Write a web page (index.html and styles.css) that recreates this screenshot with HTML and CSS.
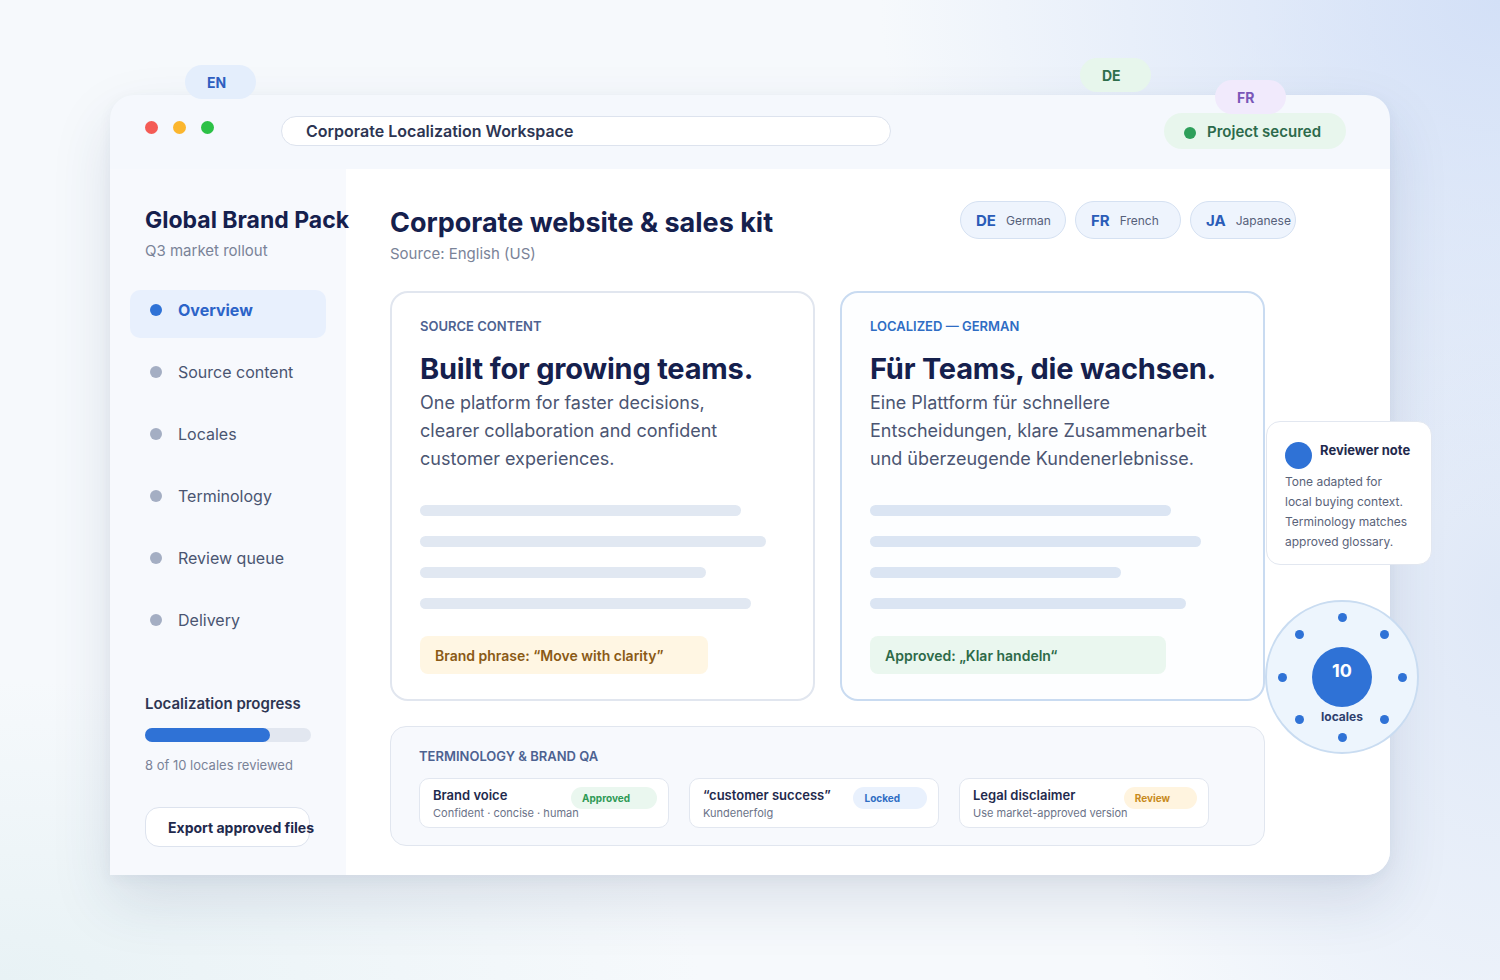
FILE: index.html
```html
<!DOCTYPE html>
<html lang="en">

<head>
    <meta charset="UTF-8">
    <meta name="viewport" content="width=device-width, initial-scale=1.0">
    <title>Corporate Localization Workspace</title>
    <link rel="stylesheet" href="styles.css">
</head>

<body>
    <div class="stage">
        <span class="float-tag tag-en">EN</span>
        <span class="float-tag tag-de">DE</span>
        <span class="float-tag tag-fr">FR</span>

        <div class="window">
            <div class="topbar">
                <div class="lights">
                    <span class="light red"></span>
                    <span class="light yellow"></span>
                    <span class="light green"></span>
                </div>
                <div class="address">Corporate Localization Workspace</div>
                <div class="secured"><span class="secured-dot"></span>Project secured</div>
            </div>

            <div class="body">
                <aside class="sidebar">
                    <h2 class="project-title">Global Brand Pack</h2>
                    <p class="project-sub">Q3 market rollout</p>

                    <nav class="nav">
                        <div class="nav-item active"><span class="nav-dot"></span>Overview</div>
                        <div class="nav-item"><span class="nav-dot"></span>Source content</div>
                        <div class="nav-item"><span class="nav-dot"></span>Locales</div>
                        <div class="nav-item"><span class="nav-dot"></span>Terminology</div>
                        <div class="nav-item"><span class="nav-dot"></span>Review queue</div>
                        <div class="nav-item"><span class="nav-dot"></span>Delivery</div>
                    </nav>

                    <div class="progress-title">Localization progress</div>
                    <div class="progress-track">
                        <div class="progress-fill" style="width: 75%;"></div>
                    </div>
                    <div class="progress-note">8 of 10 locales reviewed</div>
                    <button class="export-btn">Export approved files</button>
                </aside>

                <main class="main">
                    <div class="header">
                        <div class="heading">
                            <h1>Corporate website &amp; sales kit</h1>
                            <p class="source-lang">Source: English (US)</p>
                        </div>
                        <div class="chips">
                            <div class="chip"><b>DE</b><span>German</span></div>
                            <div class="chip"><b>FR</b><span>French</span></div>
                            <div class="chip"><b>JA</b><span>Japanese</span></div>
                        </div>
                    </div>

                    <div class="cards">
                        <section class="card">
                            <div class="card-label">SOURCE CONTENT</div>
                            <h3 class="card-title">Built for growing teams.</h3>
                            <p class="card-text">One platform for faster decisions, clearer collaboration and confident customer experiences.</p>
                            <div class="bars">
                                <div class="bar" style="width: 321px;"></div>
                                <div class="bar" style="width: 346px;"></div>
                                <div class="bar" style="width: 286px;"></div>
                                <div class="bar" style="width: 331px;"></div>
                            </div>
                            <div class="phrase phrase-brand">Brand phrase: “Move with clarity”</div>
                        </section>

                        <section class="card card-localized">
                            <div class="card-label">LOCALIZED — GERMAN</div>
                            <h3 class="card-title">Für Teams, die wachsen.</h3>
                            <p class="card-text">Eine Plattform für schnellere Entscheidungen, klare Zusammenarbeit und überzeugende Kundenerlebnisse.</p>
                            <div class="bars">
                                <div class="bar" style="width: 301px;"></div>
                                <div class="bar" style="width: 331px;"></div>
                                <div class="bar" style="width: 251px;"></div>
                                <div class="bar" style="width: 316px;"></div>
                            </div>
                            <div class="phrase phrase-approved">Approved: „Klar handeln“</div>
                        </section>
                    </div>

                    <section class="qa">
                        <div class="card-label">TERMINOLOGY &amp; BRAND QA</div>
                        <div class="qa-items">
                            <div class="qa-item">
                                <div class="qa-title">Brand voice</div>
                                <div class="qa-sub">Confident · concise · human</div>
                                <span class="badge badge-approved">Approved</span>
                            </div>
                            <div class="qa-item">
                                <div class="qa-title">“customer success”</div>
                                <div class="qa-sub">Kundenerfolg</div>
                                <span class="badge badge-locked">Locked</span>
                            </div>
                            <div class="qa-item">
                                <div class="qa-title">Legal disclaimer</div>
                                <div class="qa-sub">Use market-approved version</div>
                                <span class="badge badge-review">Review</span>
                            </div>
                        </div>
                    </section>
                </main>
            </div>

            <!-- floating widgets over the window edge -->
            <div class="note">
                <div class="note-head"><span class="note-dot"></span>Reviewer note</div>
                <p class="note-text">Tone adapted for local buying context. Terminology matches approved glossary.</p>
            </div>

            <div class="locales">
                <span class="ldot d1"></span>
                <span class="ldot d2"></span>
                <span class="ldot d3"></span>
                <span class="ldot d4"></span>
                <span class="ldot d5"></span>
                <span class="ldot d6"></span>
                <span class="ldot d7"></span>
                <span class="ldot d8"></span>
                <div class="locales-core">10</div>
                <div class="locales-label">locales</div>
            </div>
        </div>
    </div>
</body>

</html>
```

FILE: styles.css
```css
* {
    box-sizing: border-box;
}

body {
    margin: 0;
    width: 1500px;
    height: 980px;
    overflow: hidden;
    font-family: Inter, "Noto Sans", sans-serif;
    color: #1f2a4d;
    background:
        radial-gradient(ellipse 620px 520px at 1500px 0, #d3e0f7 0%, rgba(211, 224, 247, 0) 100%),
        radial-gradient(ellipse 420px 700px at 1500px 600px, #dfe8f7 0%, rgba(223, 232, 247, 0) 100%),
        radial-gradient(ellipse 700px 300px at 0 980px, #e8f2f5 0%, rgba(232, 242, 245, 0) 100%),
        #f6f9fc;
}

.stage {
    position: relative;
    width: 1500px;
    height: 980px;
    padding-top: 95px;
}

/* floating language tags */
.float-tag {
    position: absolute;
    z-index: 3;
    width: 71px;
    height: 34px;
    border-radius: 17px;
    padding-left: 22px;
    display: flex;
    align-items: center;
    font-size: 14px;
    font-weight: 700;
}

.tag-en {
    left: 185px;
    top: 65px;
    background: #e4eefc;
    color: #2f5ec0;
}

.tag-de {
    left: 1080px;
    top: 58px;
    background: #e7f6ec;
    color: #2f6e4c;
}

.tag-fr {
    left: 1215px;
    top: 80px;
    background: #f1eafc;
    color: #7a56b8;
}

/* window */
.window {
    position: relative;
    margin-left: 110px;
    width: 1280px;
    height: 780px;
    border-radius: 24px 24px 24px 0;
    background: #f5f8fd;
    box-shadow: 0 26px 60px rgba(40, 62, 105, 0.13), 0 4px 14px rgba(40, 62, 105, 0.05);
    display: flex;
    flex-direction: column;
}

.topbar {
    height: 74px;
    flex-shrink: 0;
    display: flex;
    align-items: center;
    padding: 0 44px 0 35px;
}

.lights {
    display: flex;
    gap: 15px;
    margin-bottom: 9px;
}

.light {
    width: 13px;
    height: 13px;
    border-radius: 50%;
}

.red {
    background: #f45b55;
}

.yellow {
    background: #fbb62e;
}

.green {
    background: #2cc146;
}

.address {
    margin-left: 67px;
    width: 610px;
    height: 30px;
    border: 1px solid #dde3ee;
    border-radius: 15px;
    background: #fff;
    padding-left: 24px;
    display: flex;
    align-items: center;
    font-size: 16px;
    font-weight: 600;
    color: #2d3552;
    margin-bottom: 3px;
}

.secured {
    margin-left: auto;
    height: 36px;
    padding: 0 25px 0 20px;
    border-radius: 18px;
    background: #e8f6ed;
    display: flex;
    align-items: center;
    gap: 11px;
    font-size: 15px;
    font-weight: 600;
    color: #2c6a4b;
    margin-bottom: 2px;
}

.secured-dot {
    width: 12px;
    height: 12px;
    border-radius: 50%;
    background: #2e9f5a;
    margin-top: 3px;
}

.body {
    flex: 1;
    display: flex;
    min-height: 0;
}

/* sidebar */
.sidebar {
    position: relative;
    z-index: 1;
    width: 236px;
    flex-shrink: 0;
    background: #f7f9fd;
    padding: 36px 0 0 35px;
}

.project-title {
    margin: 0;
    font-size: 23px;
    line-height: 30px;
    font-weight: 700;
    color: #15204d;
    white-space: nowrap;
}

.project-sub {
    margin: 6px 0 0;
    font-size: 15px;
    line-height: 20px;
    color: #7a8398;
}

.nav {
    margin: 29px 0 0 -15px;
    display: flex;
    flex-direction: column;
    gap: 14px;
}

.nav-item {
    width: 196px;
    height: 48px;
    padding: 0 0 8px 20px;
    border-radius: 10px;
    display: flex;
    align-items: center;
    gap: 16px;
    font-size: 16px;
    color: #4a5571;
}

.nav-dot {
    width: 12px;
    height: 12px;
    border-radius: 50%;
    background: #a4aec3;
}

.nav-item.active {
    background: #e8f0fd;
    color: #2c63c8;
    font-weight: 700;
}

.nav-item.active .nav-dot {
    background: #2f72d6;
}

.progress-title {
    margin-top: 46px;
    font-size: 15px;
    line-height: 20px;
    font-weight: 600;
    color: #2d3552;
}

.progress-track {
    margin-top: 14px;
    width: 166px;
    height: 14px;
    border-radius: 7px;
    background: #e2e7f0;
}

.progress-fill {
    height: 100%;
    border-radius: 7px;
    background: #2f72d6;
}

.progress-note {
    margin-top: 15px;
    font-size: 13px;
    line-height: 16px;
    color: #7a8398;
}

.export-btn {
    margin-top: 34px;
    width: 165px;
    height: 40px;
    padding: 0 0 0 22px;
    border: 1px solid #dde3ee;
    border-radius: 14px;
    background: #fff;
    text-align: left;
    white-space: nowrap;
    font-family: inherit;
    font-size: 14px;
    font-weight: 700;
    color: #1f2a4d;
}

/* main */
.main {
    flex: 1;
    background: #fff;
    border-bottom-right-radius: 24px;
    padding: 32px 0 0 44px;
}

.header {
    width: 906px;
    display: flex;
    justify-content: space-between;
    align-items: flex-start;
}

.heading {
    margin-top: 5px;
}

.heading h1 {
    margin: 0;
    font-size: 27px;
    line-height: 34px;
    font-weight: 700;
    color: #15204d;
}

.source-lang {
    margin: 4px 0 0;
    font-size: 15px;
    line-height: 20px;
    color: #7a8398;
}

.chips {
    display: flex;
    gap: 9px;
}

.chip {
    width: 106px;
    height: 38px;
    padding-left: 15px;
    border: 1px solid #d5e1f2;
    border-radius: 19px;
    background: #eef4fd;
    display: flex;
    align-items: center;
    gap: 10px;
    white-space: nowrap;
}

.chip b {
    font-size: 15px;
    font-weight: 700;
    color: #2a5cb8;
}

.chip span {
    font-size: 12px;
    color: #56607a;
}

.cards {
    margin-top: 27px;
    display: grid;
    grid-template-columns: 425px 425px;
    gap: 25px;
    height: 410px;
}

.card {
    border: 2px solid #e1e6ef;
    border-radius: 18px;
    background: #fff;
    padding: 25px 28px;
}

.card-localized {
    border-color: #c9dbf1;
    background: #fdfeff;
}

.card-label {
    font-size: 13px;
    line-height: 16px;
    font-weight: 600;
    color: #4d6291;
}

.card-localized .card-label {
    color: #2f6dc4;
}

.card-title {
    margin: 17px 0 0;
    font-size: 29px;
    line-height: 36px;
    font-weight: 700;
    letter-spacing: -0.2px;
    color: #15204d;
    white-space: nowrap;
}

.card-text {
    margin: 2px 0 0;
    max-width: 345px;
    font-size: 18px;
    line-height: 28px;
    color: #4b5572;
}

.bars {
    margin-top: 32px;
    display: flex;
    flex-direction: column;
    gap: 20px;
}

.bar {
    height: 11px;
    border-radius: 6px;
    background: #e1e8f2;
}

.card-localized .bar {
    background: #dbe5f3;
}

.phrase {
    margin-top: 27px;
    height: 38px;
    border-radius: 8px;
    padding-left: 15px;
    display: flex;
    align-items: center;
    font-size: 14px;
    font-weight: 600;
}

.phrase-brand {
    width: 288px;
    background: #fff6e3;
    color: #8a5a16;
}

.phrase-approved {
    width: 296px;
    background: #eaf7ef;
    color: #2d6a48;
}

/* terminology */
.qa {
    margin-top: 25px;
    width: 875px;
    height: 120px;
    border: 1px solid #e1e6ef;
    border-radius: 16px;
    background: #f7f9fd;
    padding: 21px 0 0 28px;
}

.qa .card-label {
    color: #4d6291;
}

.qa-items {
    margin-top: 14px;
    display: flex;
    gap: 20px;
}

.qa-item {
    position: relative;
    width: 250px;
    height: 50px;
    border: 1px solid #e2e7f0;
    border-radius: 10px;
    background: #fff;
    padding: 8px 13px;
}

.qa-title {
    font-size: 13px;
    line-height: 17px;
    font-weight: 600;
    color: #1f2a4d;
}

.qa-sub {
    margin-top: 2px;
    font-size: 11px;
    line-height: 15px;
    color: #6b7388;
    white-space: nowrap;
}

.badge {
    position: absolute;
    top: 8px;
    right: 11px;
    height: 22px;
    border-radius: 11px;
    padding: 0 27px 0 11px;
    font-size: 10px;
    line-height: 22px;
    font-weight: 700;
}

.badge-approved {
    background: #eaf7ef;
    color: #2e9a55;
}

.badge-locked {
    background: #e9f1fd;
    color: #2f6dc4;
}

.badge-review {
    background: #fff4df;
    color: #c88a1c;
}

/* reviewer note */
.note {
    position: absolute;
    left: 1156px;
    top: 326px;
    width: 166px;
    height: 144px;
    border: 1px solid #e2e7f0;
    border-radius: 14px;
    background: #fff;
    padding: 19px 10px 0 18px;
}

.note-head {
    display: flex;
    align-items: flex-start;
    gap: 8px;
    font-size: 13px;
    line-height: 18px;
    font-weight: 700;
    color: #1f2a4d;
}

.note-dot {
    width: 27px;
    height: 27px;
    border-radius: 50%;
    background: #2f72d6;
    flex-shrink: 0;
    margin-top: 1px;
}

.note-text {
    margin: 3px 0 0;
    width: 124px;
    font-size: 12px;
    line-height: 20px;
    color: #5a6379;
}

/* locales ring */
.locales {
    position: absolute;
    left: 1155px;
    top: 505px;
    width: 154px;
    height: 154px;
    border: 2px solid #c9dcf1;
    border-radius: 50%;
    background: #edf5fd;
}

.ldot {
    position: absolute;
    width: 9px;
    height: 9px;
    border-radius: 50%;
    background: #2f72d6;
}

.d1 { left: 71px; top: 11px; }
.d2 { left: 113px; top: 28px; }
.d3 { left: 131px; top: 71px; }
.d4 { left: 113px; top: 113px; }
.d5 { left: 71px; top: 131px; }
.d6 { left: 28px; top: 113px; }
.d7 { left: 11px; top: 71px; }
.d8 { left: 28px; top: 28px; }

.locales-core {
    position: absolute;
    left: 45px;
    top: 45px;
    width: 60px;
    height: 60px;
    border-radius: 50%;
    background: #2f72d6;
    color: #fff;
    font-size: 18px;
    font-weight: 700;
    display: flex;
    justify-content: center;
    padding-top: 13px;
}

.locales-label {
    position: absolute;
    left: 0;
    right: 0;
    top: 107px;
    text-align: center;
    font-size: 12px;
    font-weight: 700;
    color: #2d3f6e;
}
```
